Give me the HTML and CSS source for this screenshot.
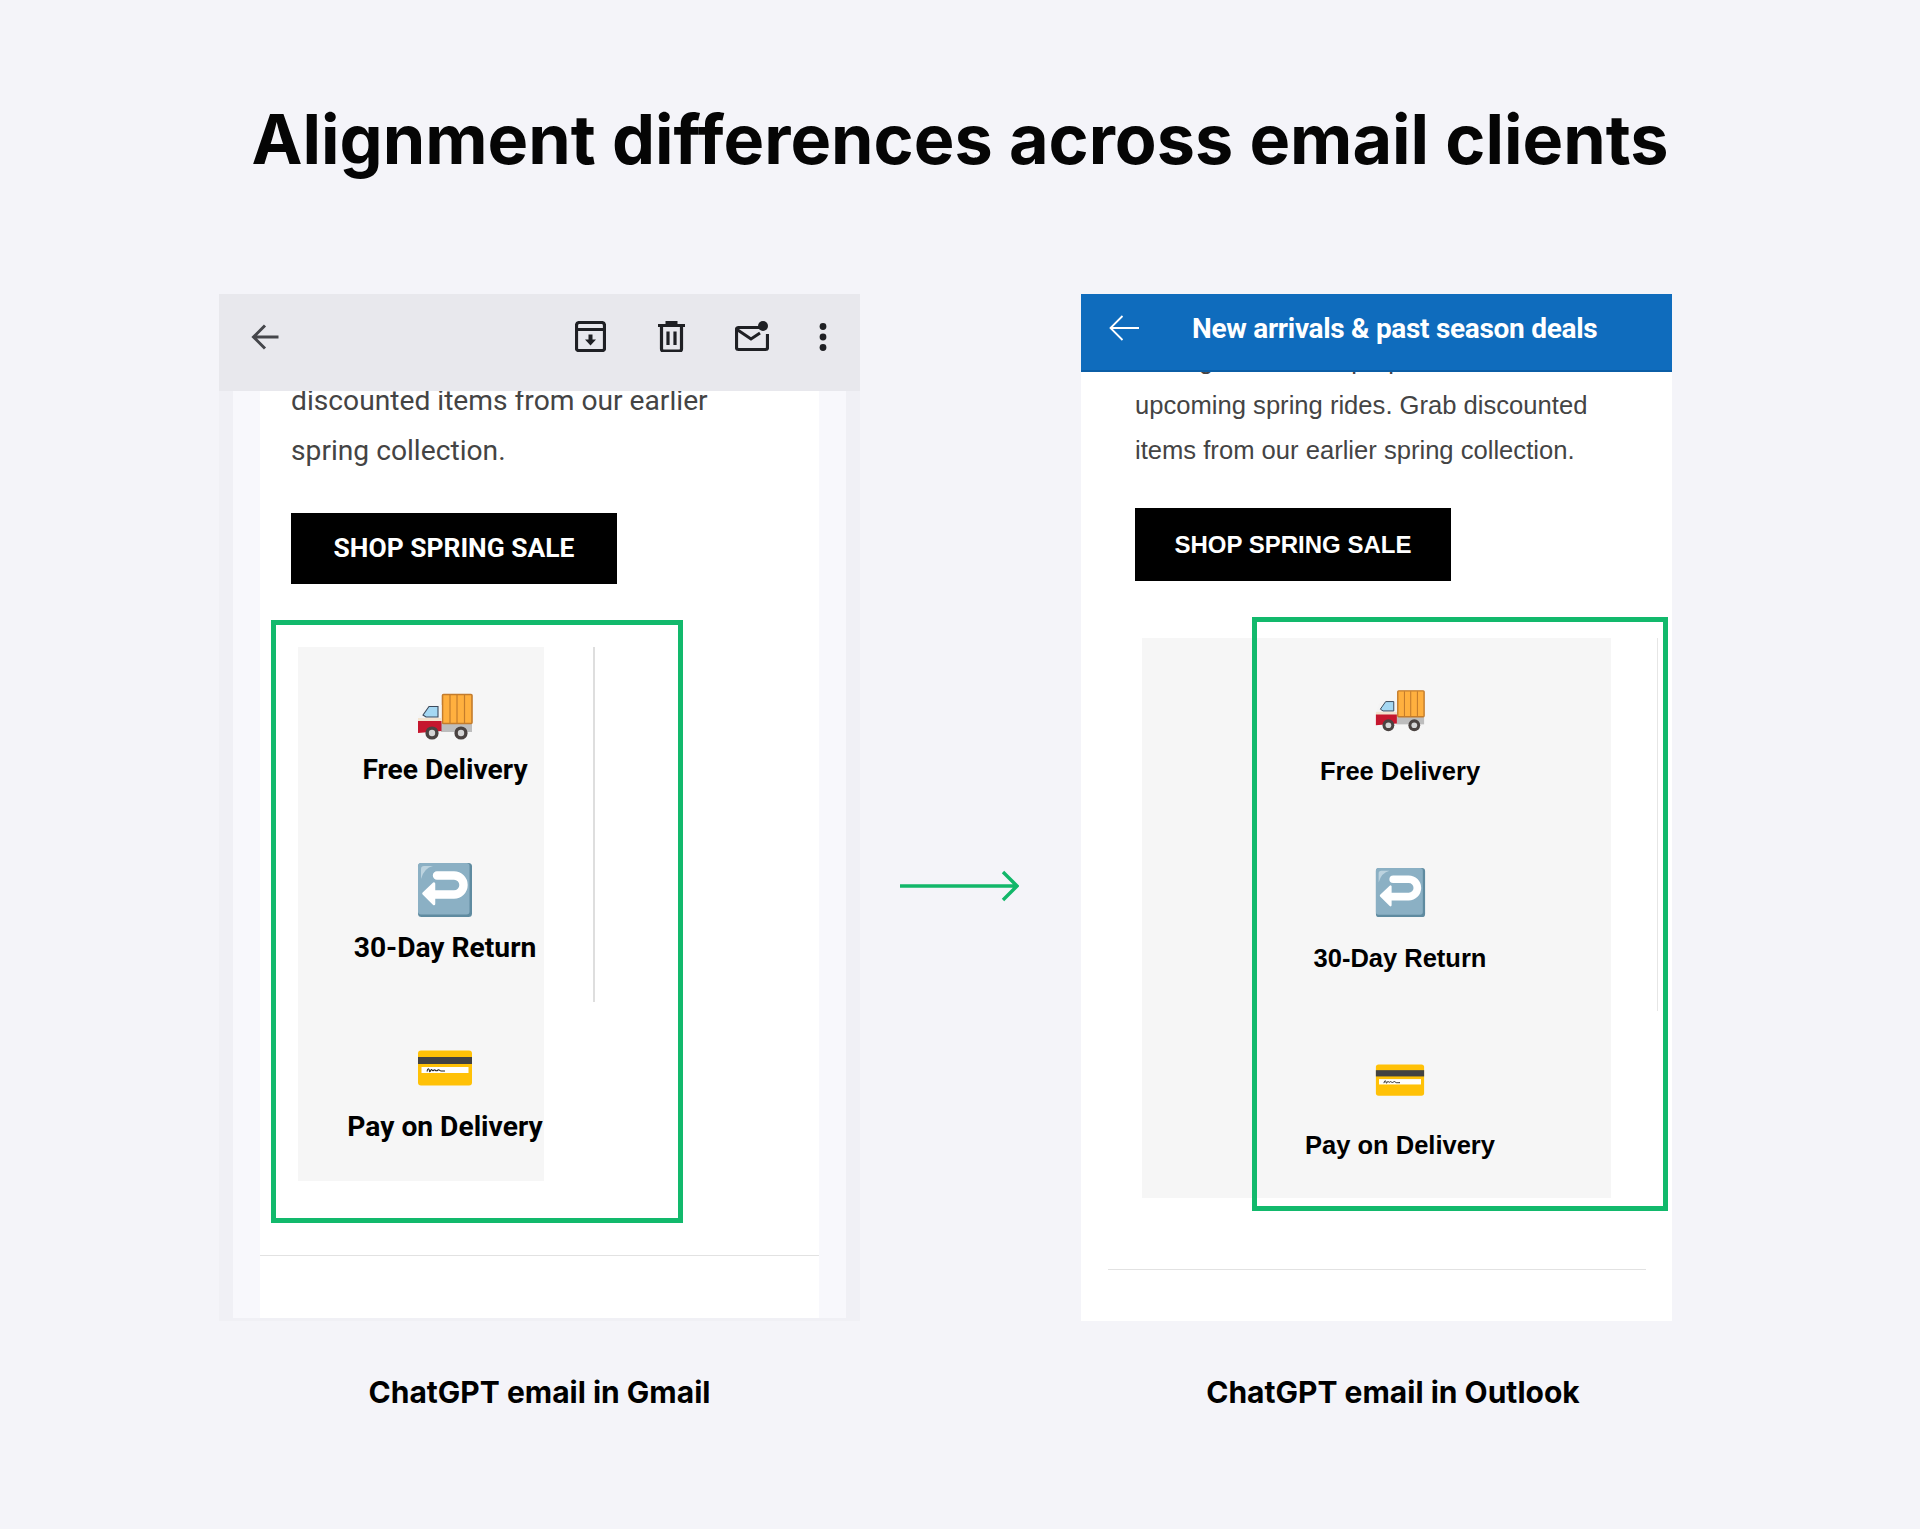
FILE: index.html
```html
<!DOCTYPE html>
<html lang="en">
<head>
  <meta charset="UTF-8" />
  <meta name="viewport" content="width=device-width, initial-scale=1" />
  <title>Alignment differences across email clients</title>
  <link rel="stylesheet" href="styles.css">
</head>
<body>
  <svg class="sprites" width="0" height="0" aria-hidden="true">
    <symbol id="truck" viewBox="0 0 56 47">
      <rect x="24" y="30" width="31" height="9" fill="#bdbdbd" />
      <rect x="25.500" y="1.500" width="29.500" height="29" rx="1" fill="#ffb03f" stroke="#c47c2c" stroke-width="1.600" />
      <path d="M33 2v28M40 2v28M47.500 2v28" stroke="#c47c2c" stroke-width="1.200" />
      <path d="M1 26 5 15q2-3 5-3h14.500v16H1z" fill="#f4f4f4" />
      <path d="M1 25h23.500v4H1z" fill="#f3e3cf" />
      <path d="M1 28h23.500v10l-23.500 2z" fill="#c5172e" />
      <path d="M6 22 12 13.500h9V24H9z" fill="#a5d8f3" stroke="#3c4a5c" stroke-width="1.100" />
      <circle cx="15" cy="40" r="6.600" fill="#4a4341" />
      <circle cx="15" cy="40" r="3.200" fill="#d5d5d5" />
      <circle cx="44" cy="40" r="6.600" fill="#4a4341" />
      <circle cx="44" cy="40" r="3.200" fill="#d5d5d5" />
    </symbol>
    <symbol id="return-key" viewBox="0 0 56 56">
      <rect x="1" y="1" width="54" height="54" rx="3.500" fill="#5f8ba0" />
      <rect x="1" y="1" width="51.500" height="51.500" rx="3" fill="#8bb0c4" />
      <path d="M4 17V7q0-3 3-3h9q-9 2-12 13z" fill="#bcd3df" />
      <path d="M18 32.500H37a9.500 9.500 0 0 0 0-19H20" fill="none" stroke="#fff" stroke-width="8.400" stroke-linecap="round" />
      <path d="M6.500 31.500 17 21.500v20.500z" fill="#fff" stroke="#fff" stroke-width="2.500" stroke-linejoin="round" />
    </symbol>
    <symbol id="card" viewBox="0 0 56 36">
      <rect x="1" y="0.500" width="54" height="35" rx="3" fill="#ffc107" />
      <rect x="1" y="7" width="54" height="7" fill="#424242" />
      <rect x="4.500" y="17" width="47" height="6" fill="#fff" />
      <path d="M10 21.500c1-4 2-3 2.500-.5s1.500-3 2.500-1 2-1 3 0 2 1 3 0 2 1 3 1 2 0 4 0" fill="none" stroke="#222" stroke-width="1.100" />
    </symbol>
  </svg>

  <div class="page">
    <h1 class="title">Alignment differences across email clients</h1>

    <div class="compare">
      <div class="client client-gmail">
        <div class="phone gmail">
          <div class="gmail-bar">
            <svg class="bar-back" width="28" height="28" viewBox="0 0 28 28"><path d="M27.500 14H2.500M14 2.500 2.500 14 14 25.500" fill="none" stroke="#45464b" stroke-width="3" /></svg>
            <svg class="bar-archive" width="31" height="31" viewBox="0 0 31 31"><path d="M4.500 1.500h22q3 0 3 3v23q0 2-2 2h-24q-2 0-2-2v-23q0-3 3-3zM1.500 8.500h28" fill="none" stroke="#1f2024" stroke-width="3.200" /><path d="M13.500 13.500h4v5h3.500l-5.500 6-5.500-6h3.500z" fill="#1f2024" /></svg>
            <svg class="bar-trash" width="27" height="31" viewBox="0 0 27 31"><path d="M0 4.500h27M9 4.500V1.500h9v3" fill="none" stroke="#1f2024" stroke-width="3" /><path d="M3.500 4.500v23.500q0 2 2 2h16q2 0 2-2V4.500" fill="none" stroke="#1f2024" stroke-width="3.200" /><path d="M10 10.500v13.500M17 10.500v13.500" stroke="#1f2024" stroke-width="3.200" /></svg>
            <svg class="bar-mail" width="34" height="31" viewBox="0 0 34 31"><path d="M24 6.500H3.500q-2 0-2 2v18q0 2 2 2h27q2 0 2-2V13" fill="none" stroke="#1f2024" stroke-width="3.200" /><path d="M2 8.500 16 18 25 12" fill="none" stroke="#1f2024" stroke-width="3" /><circle cx="28" cy="5" r="5" fill="#1f2024" /></svg>
            <svg class="bar-more" width="8" height="28" viewBox="0 0 8 28"><circle cx="4" cy="3.500" r="3.400" fill="#1f2024" /><circle cx="4" cy="14" r="3.400" fill="#1f2024" /><circle cx="4" cy="24.500" r="3.400" fill="#1f2024" /></svg>
          </div>
          <div class="gmail-edge">
            <div class="gmail-gutter">
              <div class="gmail-mail">
                <p class="gmail-copy">discounted items from our earlier<br>spring collection.</p>
                <div class="gmail-cta">SHOP SPRING SALE</div>
                <div class="perks-row">
                  <div class="perks">
                    <svg class="perk-icon icon-truck"><use href="#truck" /></svg>
                    <div class="perk-label">Free Delivery</div>
                    <svg class="perk-icon icon-return"><use href="#return-key" /></svg>
                    <div class="perk-label">30-Day Return</div>
                    <svg class="perk-icon icon-card"><use href="#card" /></svg>
                    <div class="perk-label">Pay on Delivery</div>
                  </div>
                  <div class="perks-line"></div>
                </div>
                <hr class="mail-rule">
              </div>
            </div>
          </div>
          <div class="highlight"></div>
        </div>
        <div class="caption">ChatGPT email in Gmail</div>
      </div>

      <svg class="compare-arrow" width="119" height="32" viewBox="0 0 119 32"><path d="M0 16H117M103 2 117 16 103 30" fill="none" stroke="#12b76a" stroke-width="3.400" /></svg>

      <div class="client client-outlook">
        <div class="phone outlook">
          <div class="outlook-bar">
            <svg class="outlook-back" width="30" height="26" viewBox="0 0 30 26"><path d="M30 13H1.500M13.500 1 1.500 13l12 12" fill="none" stroke="#fff" stroke-width="1.800" /></svg>
            <div class="outlook-subject">New arrivals &amp; past season deals</div>
          </div>
          <div class="outlook-mail">
            <p class="outlook-copy">Saving on bikes to prep for the<br>upcoming spring rides. Grab discounted<br>items from our earlier spring collection.</p>
            <div class="outlook-cta">SHOP SPRING SALE</div>
            <div class="perks-row">
              <div class="perks">
                <svg class="perk-icon icon-truck"><use href="#truck" /></svg>
                <div class="perk-label">Free Delivery</div>
                <svg class="perk-icon icon-return"><use href="#return-key" /></svg>
                <div class="perk-label">30-Day Return</div>
                <svg class="perk-icon icon-card"><use href="#card" /></svg>
                <div class="perk-label">Pay on Delivery</div>
              </div>
              <div class="perks-line"></div>
            </div>
            <hr class="mail-rule">
          </div>
          <div class="highlight"></div>
        </div>
        <div class="caption">ChatGPT email in Outlook</div>
      </div>
    </div>
  </div>
</body>
</html>
```

FILE: styles.css
```css
body {
  margin: 0;
  background: #f4f4f9;
  font-family: 'Inter', sans-serif;
  color: #000;
}

.sprites {
  position: absolute;
}

.page {
  height: 1529px;
  overflow: hidden;
}

.title {
  margin: 0;
  padding-top: 95px;
  font-size: 68.3px;
  line-height: 88px;
  font-weight: 700;
  text-align: center;
  color: #050505;
}

.compare {
  display: flex;
  align-items: flex-start;
  margin-top: 111px;
  padding-left: 219px;
}

.client-gmail {
  width: 641px;
}

.client-outlook {
  width: 591px;
}

.compare-arrow {
  margin: 576px 62px 0 40px;
  flex: none;
}

.phone {
  position: relative;
  height: 1027px;
}

.caption {
  margin-top: 53px;
  font-size: 30px;
  line-height: 36px;
  font-weight: 700;
  text-align: center;
}

.client-outlook .caption {
  padding-left: 33px;
}

.highlight {
  position: absolute;
  box-sizing: border-box;
  border: 5px solid #12b96c;
}

/* gmail side */
.gmail {
  display: flex;
  flex-direction: column;
}

.gmail-bar {
  display: flex;
  align-items: center;
  height: 85px;
  padding-bottom: 12px;
  background: #e8e8ed;
  flex: none;
}

.bar-back {
  margin-left: 32px;
}

.bar-archive {
  margin-left: 296px;
}

.bar-trash {
  margin-left: 52px;
}

.bar-mail {
  margin-left: 50px;
}

.bar-more {
  margin-left: 50px;
}

.gmail-edge {
  flex: 1;
  padding: 0 14px 3px;
  background: #f0f0f5;
  min-height: 0;
}

.gmail-gutter {
  height: 100%;
  padding: 0 27px 0 27px;
  background: #f8f8fc;
  box-sizing: border-box;
}

.gmail-mail {
  height: 100%;
  overflow: hidden;
  background: #fff;
}

.gmail-copy {
  margin: -15px 0 0 31px;
  font-family: 'Roboto', sans-serif;
  font-size: 28.2px;
  line-height: 50px;
  color: #444;
}

.gmail-cta {
  width: 326px;
  height: 71px;
  margin: 37px 0 0 31px;
  background: #000;
  color: #fff;
  font-family: 'Roboto', sans-serif;
  font-size: 26.4px;
  font-weight: 700;
  line-height: 71px;
  text-align: center;
}

.perks-row {
  display: flex;
  align-items: flex-start;
}

.perks {
  display: flex;
  flex-direction: column;
  align-items: center;
  box-sizing: border-box;
  background: #f6f6f6;
  flex: none;
}

.perk-icon {
  display: block;
  flex: none;
}

.perk-label {
  white-space: nowrap;
}

.perks-line {
  width: 2px;
  background: #dedede;
  flex: none;
}

.mail-rule {
  height: 1px;
  margin: 0;
  border: 0;
  background: #e2e2e2;
}

.gmail .perks-row {
  margin: 63px 0 0 38px;
}

.gmail .perks {
  width: 246px;
  height: 534px;
  padding: 46px 0 0 48px;
}

.gmail .perks-line {
  height: 355px;
  margin-left: 49px;
}

.gmail .perk-label {
  font-family: 'Roboto', sans-serif;
  font-size: 28.2px;
  font-weight: 700;
  line-height: 34px;
}

.gmail .icon-truck {
  width: 56px;
  height: 47px;
  margin-bottom: 13px;
}

.gmail .icon-return {
  width: 56px;
  height: 56px;
  margin: 75px 0 13px;
}

.gmail .icon-card {
  width: 56px;
  height: 36px;
  margin: 85px 0 24px;
}

.gmail .mail-rule {
  margin-top: 74px;
}

.gmail .highlight {
  left: 52px;
  top: 326px;
  width: 412px;
  height: 603px;
}

/* outlook side */
.outlook {
  background: #fff;
  overflow: hidden;
}

.outlook-bar {
  position: relative;
  z-index: 1;
  display: flex;
  align-items: center;
  box-sizing: border-box;
  height: 78px;
  padding: 0 0 8px 28px;
  background: #0f6cbd;
  border-bottom: 2px solid #0b5ea6;
}

.outlook-subject {
  margin-left: 53px;
  font-family: 'Roboto', sans-serif;
  font-size: 28px;
  font-weight: 700;
  letter-spacing: -0.3px;
  color: #fff;
  white-space: nowrap;
}

.outlook-copy {
  margin: -34px 0 0 54px;
  font-family: 'Liberation Sans', sans-serif;
  font-size: 25.6px;
  line-height: 45px;
  color: #444;
  white-space: nowrap;
}

.outlook-cta {
  width: 316px;
  height: 73px;
  margin: 35px 0 0 54px;
  background: #000;
  color: #fff;
  font-family: 'Liberation Sans', sans-serif;
  font-size: 24px;
  font-weight: 700;
  line-height: 73px;
  text-align: center;
}

.outlook .perks-row {
  margin: 57px 0 0 61px;
}

.outlook .perks {
  width: 469px;
  height: 560px;
  padding: 51px 0 0 47px;
}

.outlook .perks-line {
  width: 1px;
  height: 373px;
  margin-left: 46px;
  background: #e6e6e6;
}

.outlook .perk-label {
  font-family: 'Liberation Sans', sans-serif;
  font-size: 25.5px;
  font-weight: 700;
  line-height: 30px;
}

.outlook .icon-truck {
  width: 50px;
  height: 43px;
  margin-bottom: 24px;
}

.outlook .icon-return {
  width: 51px;
  height: 51px;
  margin: 81px 0 25px;
}

.outlook .icon-card {
  width: 50px;
  height: 34px;
  margin: 90px 0 33px;
}

.outlook .mail-rule {
  width: 538px;
  margin: 71px 0 0 27px;
}

.outlook .highlight {
  z-index: 1;
  left: 171px;
  top: 323px;
  width: 416px;
  height: 594px;
}
```
